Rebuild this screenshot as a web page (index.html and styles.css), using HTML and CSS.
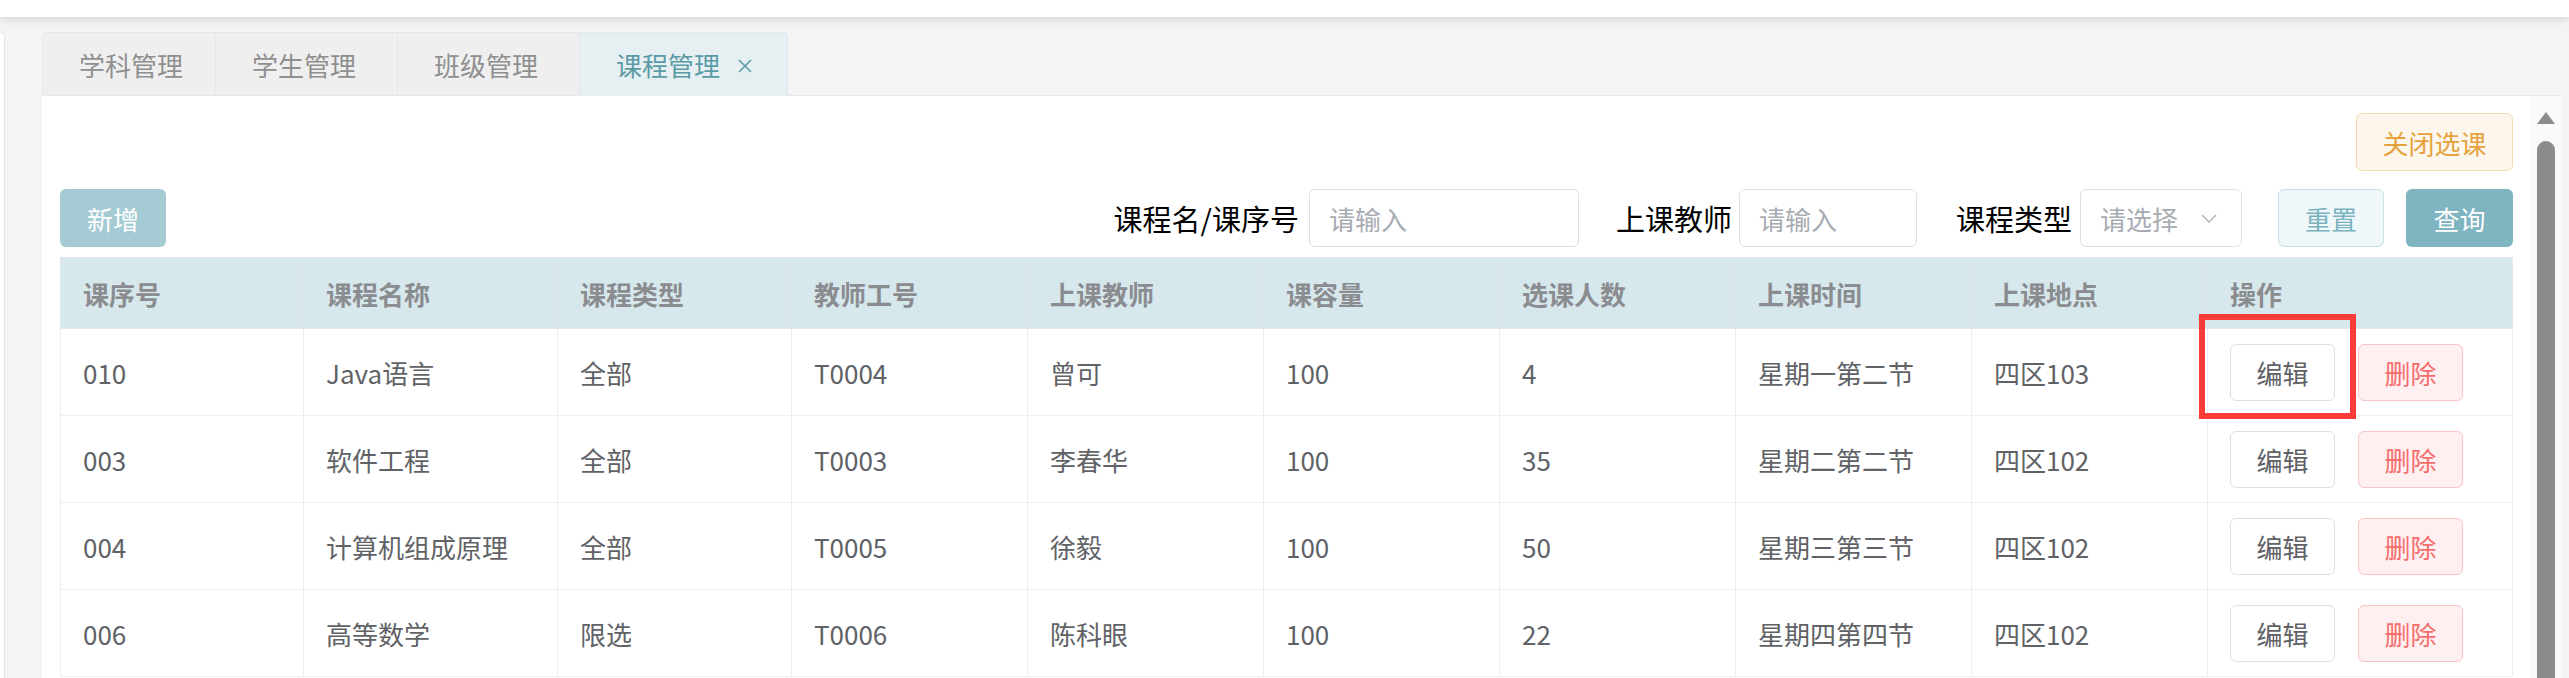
FILE: index.html
```html
<!DOCTYPE html>
<html lang="zh-CN">
<head>
<meta charset="utf-8">
<title>课程管理</title>
<link rel="stylesheet" href="styles.css">
</head>
<body>
<div class="topbar"></div>
<div class="page">
  <aside class="side"></aside>
  <main class="main">
    <nav class="tabs">
      <div class="tab">学科管理</div>
      <div class="tab">学生管理</div>
      <div class="tab">班级管理</div>
      <div class="tab active">课程管理<svg class="close" viewBox="0 0 14 14"><path d="M1 1L13 13M13 1L1 13" stroke="currentColor" stroke-width="1.6" fill="none"/></svg></div>
    </nav>
    <section class="panel">
      <div class="content">
        <div class="toprow">
          <button class="btn btn-warn">关闭选课</button>
        </div>
        <div class="toolbar">
          <button class="btn btn-add">新增</button>
          <div class="search">
            <span class="lbl lbl-1">课程名/课序号</span>
            <input class="field field-1" placeholder="请输入">
            <span class="lbl lbl-2">上课教师</span>
            <input class="field field-2" placeholder="请输入">
            <span class="lbl lbl-3">课程类型</span>
            <div class="select"><span>请选择</span><svg class="chev" viewBox="0 0 16 9"><path d="M1 1L8 8L15 1" stroke="currentColor" stroke-width="1.5" fill="none"/></svg></div>
            <button class="btn btn-reset">重置</button>
            <button class="btn btn-query">查询</button>
          </div>
        </div>
        <table class="grid">
          <colgroup>
            <col class="c1"><col class="c2"><col class="c3"><col class="cx"><col class="cx"><col class="cx"><col class="cx"><col class="cx"><col class="cx"><col class="cl">
          </colgroup>
          <thead>
            <tr><th>课序号</th><th>课程名称</th><th>课程类型</th><th>教师工号</th><th>上课教师</th><th>课容量</th><th>选课人数</th><th>上课时间</th><th>上课地点</th><th>操作</th></tr>
          </thead>
          <tbody>
            <tr><td>010</td><td>Java语言</td><td>全部</td><td>T0004</td><td>曾可</td><td>100</td><td>4</td><td>星期一第二节</td><td>四区103</td><td><div class="ops"><button class="btn btn-edit">编辑</button><button class="btn btn-del">删除</button><span class="mark"></span></div></td></tr>
            <tr><td>003</td><td>软件工程</td><td>全部</td><td>T0003</td><td>李春华</td><td>100</td><td>35</td><td>星期二第二节</td><td>四区102</td><td><div class="ops"><button class="btn btn-edit">编辑</button><button class="btn btn-del">删除</button></div></td></tr>
            <tr><td>004</td><td>计算机组成原理</td><td>全部</td><td>T0005</td><td>徐毅</td><td>100</td><td>50</td><td>星期三第三节</td><td>四区102</td><td><div class="ops"><button class="btn btn-edit">编辑</button><button class="btn btn-del">删除</button></div></td></tr>
            <tr><td>006</td><td>高等数学</td><td>限选</td><td>T0006</td><td>陈科眼</td><td>100</td><td>22</td><td>星期四第四节</td><td>四区102</td><td><div class="ops"><button class="btn btn-edit">编辑</button><button class="btn btn-del">删除</button></div></td></tr>
          </tbody>
        </table>
      </div>
      <div class="scrollbar">
        <div class="arrow"></div>
        <div class="thumb"></div>
      </div>
    </section>
  </main>
</div>
</body>
</html>
```

FILE: styles.css
```css
* { box-sizing: border-box; }
html, body { margin: 0; padding: 0; }
body {
  width: 2569px;
  height: 678px;
  overflow: hidden;
  background: #f4f4f4;
  font-family: "Noto Sans CJK SC", "Microsoft YaHei", sans-serif;
  color: #606266;
}
.topbar {
  height: 17px;
  background: #fff;
  box-shadow: 0 2px 9px rgba(0, 0, 0, 0.14);
  position: relative;
  z-index: 1;
}
.page { display: flex; height: 661px; }
.side {
  width: 5px;
  margin-top: 15px;
  background: #fff;
  border: 1px solid #e6e6e6;
  border-left: none;
  border-bottom: none;
  border-top-right-radius: 6px;
}
.main {
  flex: 1;
  padding: 15px 8px 0 37px;
  display: flex;
  flex-direction: column;
  min-width: 0;
}
.tabs {
  display: flex;
  height: 64px;
  border-bottom: 1px solid #e4e7ed;
  flex: none;
}
.tab {
  height: 63px;
  display: flex;
  align-items: center;
  padding: 0 41px 0 36px;
  background: #efefef;
  border: 1px solid #e4e7ed;
  border-left: none;
  border-bottom: none;
  font-size: 26px;
  color: #8f8f8f;
  white-space: nowrap;
}
.tab:first-child {
  border-left: 1px solid #e4e7ed;
  border-top-left-radius: 5px;
  padding-right: 32px;
}
.tab.active {
  background: #e6f0f3;
  color: #5b9ba5;
  padding-right: 35px;
  border-top-right-radius: 5px;
  height: 64px;
  margin-bottom: -1px;
}
.close { width: 14px; height: 14px; margin-left: 18px; margin-top: 2px; }
.panel { flex: 1; display: flex; background: #fff; min-height: 0; }
.content { flex: 1; padding: 17px 18px 0; min-width: 0; }
.toprow { display: flex; justify-content: flex-end; }
.btn {
  height: 58px;
  border-radius: 6px;
  font-size: 26px;
  font-family: inherit;
  display: inline-flex;
  align-items: center;
  justify-content: center;
  border: 1px solid transparent;
  padding: 0;
  flex: none;
}
.btn-warn { width: 157px; background: #fdf6ec; border-color: #f5dab1; color: #e6a23c; }
.btn-add { width: 106px; background: #a4cbd3; color: #fff; }
.btn-reset { width: 106px; background: #f0f7f9; border-color: #c5e0e6; color: #7ab3bf; margin-left: 36px; }
.btn-query { width: 107px; background: #7fb5c0; color: #fff; margin-left: 22px; }
.btn-edit { width: 105px; height: 57px; background: #fff; border-color: #dcdfe6; color: #606266; }
.btn-del { width: 105px; height: 57px; background: #fef0f0; border-color: #fbc4c4; color: #f56c6c; margin-left: 23px; }
.toolbar {
  margin-top: 18px;
  height: 58px;
  display: flex;
  justify-content: space-between;
  align-items: center;
}
.search { display: flex; align-items: center; }
.lbl { font-size: 29px; color: #000; white-space: nowrap; }
.lbl-1 { margin-right: 10px; }
.lbl-2 { margin-left: 37px; margin-right: 7px; }
.lbl-3 { margin-left: 39px; margin-right: 8px; }
.field {
  height: 58px;
  border: 1px solid #dcdfe6;
  border-radius: 6px;
  padding: 0 19px;
  font-size: 26px;
  font-family: inherit;
  color: #606266;
  outline: none;
}
.field::placeholder { color: #a8abb2; }
.field-1 { width: 270px; }
.field-2 { width: 178px; }
.select {
  width: 162px;
  height: 58px;
  border: 1px solid #dcdfe6;
  border-radius: 6px;
  padding: 0 24px 0 19px;
  display: flex;
  align-items: center;
  justify-content: space-between;
  font-size: 26px;
  color: #a8abb2;
}
.chev { width: 16px; height: 9px; color: #b4b6bb; }
.grid {
  margin-top: 10px;
  width: 2452px;
  border-collapse: collapse;
  table-layout: fixed;
  font-size: 26px;
}
.c1 { width: 243px; }
.c2 { width: 254px; }
.c3 { width: 234px; }
.cx { width: 236px; }
.cl { width: 305px; }
.grid th, .grid td {
  border: 1px solid #ebeef5;
  padding: 0 22px;
  text-align: left;
  white-space: nowrap;
}
.grid th {
  background: #d6e8ec;
  color: #8b8c90;
  font-weight: 700;
  height: 71px;
  border-color: #e2e8ee;
}
.grid td { height: 87px; color: #606266; }
.ops { display: flex; align-items: center; position: relative; }
.mark {
  position: absolute;
  left: -31px;
  top: -30px;
  width: 157px;
  height: 105px;
  border: 6px solid #fb3a3a;
}
.scrollbar {
  width: 30px;
  flex: none;
  background: #fafafa;
  display: flex;
  flex-direction: column;
  align-items: center;
  padding-top: 16px;
}
.arrow {
  width: 0;
  height: 0;
  border-left: 9px solid transparent;
  border-right: 9px solid transparent;
  border-bottom: 12px solid #8c8c8c;
}
.thumb {
  margin-top: 17px;
  width: 18px;
  flex: 1;
  background: #8c8c8c;
  border-radius: 9px 9px 0 0;
}
```
